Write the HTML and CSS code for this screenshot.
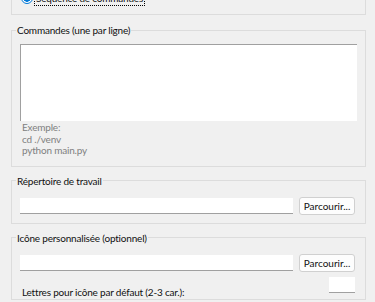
FILE: index.html
```html
<!DOCTYPE html>
<html lang="fr">
<head>
  <meta charset="utf-8">
  <title>Configuration de la commande</title>
  <link rel="stylesheet" href="styles.css">
</head>
<body>

<div class="panel">

  <div class="group top">
    <label class="radio"><span class="dot"></span><span class="focus">Séquence de commandes</span></label>
  </div>

  <fieldset class="group cmd-group">
    <legend>Commandes (une par ligne)</legend>
    <textarea class="cmds"></textarea>
    <div class="hint">Exemple:<br>cd ./venv<br>python main.py</div>
  </fieldset>

  <fieldset class="group">
    <legend>Répertoire de travail</legend>
    <div class="row">
      <input class="entry" type="text">
      <button>Parcourir...</button>
    </div>
  </fieldset>

  <fieldset class="group">
    <legend>Icône personnalisée (optionnel)</legend>
    <div class="row">
      <input class="entry" type="text">
      <button>Parcourir...</button>
    </div>
    <div class="row letters">
      <span>Lettres pour icône par défaut (2-3 car.):</span>
      <input class="entry short" type="text">
    </div>
  </fieldset>

</div>

</body>
</html>
```

FILE: styles.css
```css
:root { --bg:#f0f0f0; --line:#dcdcdc; --field:#a0a0a0; }
*{box-sizing:border-box}
html,body{margin:0;height:100%;overflow:hidden}
body{background:var(--bg);color:#111;font:10px/12px Lato,"Open Sans",sans-serif;letter-spacing:-.2px}

.panel{padding:0 9px 0 11px;display:flex;flex-direction:column}

.group{margin:0;border:1px solid var(--line);padding:0 8px;min-width:0}
.group + .group{margin-top:6px}
.group.cmd-group{margin-top:7px}
legend{padding:0 1px;margin-left:-4px;line-height:16px}

.top{height:35px;margin-top:-20px;padding-top:10px;padding-left:9px}
.radio{display:flex;align-items:center;gap:2px;height:14px}
.dot{width:12px;height:12px;border-radius:50%;border:1px solid #0078d7;
     background:radial-gradient(circle,#0078d7 0 3.5px,#fff 4px)}
.focus{outline:1px dotted #000;line-height:13px;padding:0 1px}

.cmds{display:block;width:100%;height:77px;margin-top:6px;resize:none;
      border:0;border-top:1px solid var(--field);border-left:1px solid var(--field);
      background:#fff;font:inherit;padding:1px 3px}
.hint{color:#808080;line-height:11.5px;padding:1px 2px 9px}

.row{display:flex;align-items:center;gap:6px;padding-right:2px}
.group .row:first-of-type{margin-top:8px;margin-bottom:8px}
.group .row.letters{margin-top:-3px;margin-bottom:1px}
.entry{flex:1;min-width:0;height:16px;border:0;border-bottom:1px solid var(--field);
       background:#fff;font:inherit;padding:0 3px;margin:0}
button{width:56px;height:18px;padding:0;font:inherit;line-height:14px;color:#111;
       background:#fdfdfd;border:1px solid #d0d0d0;border-radius:3px}
.letters{height:21px;align-items:flex-start;justify-content:space-between;padding-left:2px}
.letters span{align-self:flex-end;line-height:12px}
.letters .short{flex:0 0 26px}
```
